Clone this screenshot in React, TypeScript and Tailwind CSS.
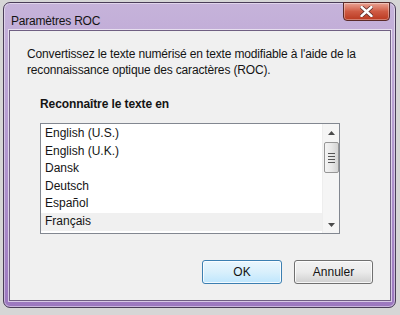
import { useState } from 'react';

const languages = ['English (U.S.)', 'English (U.K.)', 'Dansk', 'Deutsch', 'Español', 'Français'];

function ScrollBar() {
  return (
    <div className="w-[17px] flex flex-col items-center bg-[#f5f5f5] border-l border-[#eeeeee]">
      <div className="h-[17px] w-full flex items-center justify-center">
        <svg width="7" height="4" viewBox="0 0 7 4">
          <path d="M0 4 L3.5 0 L7 4 Z" fill="#4a4a4a" />
        </svg>
      </div>
      <div className="mt-[1px] w-[15px] h-[31px] rounded-[2px] border border-[#969696] bg-gradient-to-r from-[#f4f4f4] via-[#e8e8e8] to-[#d4d4d4] flex flex-col items-center justify-center gap-[2px]">
        <div className="w-[7px] h-px bg-[#555]" />
        <div className="w-[7px] h-px bg-[#555]" />
        <div className="w-[7px] h-px bg-[#555]" />
        <div className="w-[7px] h-px bg-[#555]" />
      </div>
      <div className="flex-1" />
      <div className="h-[17px] w-full flex items-center justify-center">
        <svg width="7" height="4" viewBox="0 0 7 4">
          <path d="M0 0 L7 0 L3.5 4 Z" fill="#4a4a4a" />
        </svg>
      </div>
    </div>
  );
}

export default function App() {
  const [selected, setSelected] = useState(5);

  return (
    <div
      className="w-[400px] h-[315px] overflow-hidden bg-[#d6d6d6] pt-[2px] pl-[3px]"
      style={{ fontFamily: '"Liberation Sans", Arial, sans-serif' }}
    >
      {/* Window frame */}
      <div className="w-[393px] h-[306px] rounded-[7px] border border-[#4a3d58] bg-gradient-to-b from-[#c6b3da] via-[#b297cf] to-[#9c78bf] shadow-[inset_0_0_0_1px_rgba(255,255,255,0.45)] flex flex-col pl-[5px] pr-[4px] pb-[6px]">
        {/* Title bar */}
        <div className="h-[27px] flex items-start justify-between">
          <span className="text-[12px] text-[#141414] mt-[9px] ml-[2px] tracking-[-0.2px]">Paramètres ROC</span>
          <button className="w-[47px] h-[19px] -mt-px mr-[1px] rounded-b-[4px] border border-[#5a2a28] bg-gradient-to-b from-[#e9a394] via-[#cf5a43] to-[#b9381f] shadow-[inset_0_0_0_1px_rgba(255,255,255,0.35)] flex items-center justify-center">
            <svg width="13" height="11" viewBox="0 0 13 11">
              <path d="M1.5 1 L11.5 10 M11.5 1 L1.5 10" stroke="#5a2a28" strokeWidth="4" strokeLinecap="round" />
              <path d="M1.5 1 L11.5 10 M11.5 1 L1.5 10" stroke="#ffffff" strokeWidth="2.4" strokeLinecap="round" />
            </svg>
          </button>
        </div>

        {/* Client area */}
        <div className="flex-1 border border-[#6f5f82] bg-[#f0f0f0] shadow-[0_0_0_1px_rgba(255,255,255,0.6)] flex flex-col text-[12px] text-[#141414]">
          <p className="mt-[15px] ml-[17px] leading-[16px] tracking-[-0.15px]">
            Convertissez le texte numérisé en texte modifiable à l'aide de la
            <br />
            reconnaissance optique des caractères (ROC).
          </p>

          <div className="mt-[18px] ml-[30px] font-bold leading-[17px] tracking-[-0.1px]">Reconnaître le texte en</div>

          {/* List box */}
          <div className="mt-[10px] ml-[30px] w-[300px] h-[111px] border border-[#828790] bg-white flex">
            <ul className="flex-1 pt-[1px]">
              {languages.map((lang, i) => (
                <li
                  key={lang}
                  onClick={() => setSelected(i)}
                  className={
                    'h-[17.6px] leading-[17.6px] pl-[4px] ' + (i === selected ? 'bg-[#f0f0f0]' : '')
                  }
                >
                  {lang}
                </li>
              ))}
            </ul>
            <ScrollBar />
          </div>

          {/* Buttons */}
          <div className="mt-[26px] flex justify-end gap-[12px] pr-[17px]">
            <button className="w-[80px] h-[24px] rounded-[3px] border border-[#3c7fb1] bg-gradient-to-b from-[#eaf6fd] via-[#d9f0fc] to-[#bee6fd] shadow-[inset_0_0_0_1px_rgba(255,255,255,0.8)] text-[12px] text-[#141414]">
              OK
            </button>
            <button className="w-[79px] h-[24px] rounded-[3px] border border-[#707070] bg-gradient-to-b from-[#f2f2f2] via-[#ebebeb] to-[#cfcfcf] shadow-[inset_0_0_0_1px_rgba(255,255,255,0.8)] text-[12px] text-[#141414]">
              Annuler
            </button>
          </div>
        </div>
      </div>
    </div>
  );
}
